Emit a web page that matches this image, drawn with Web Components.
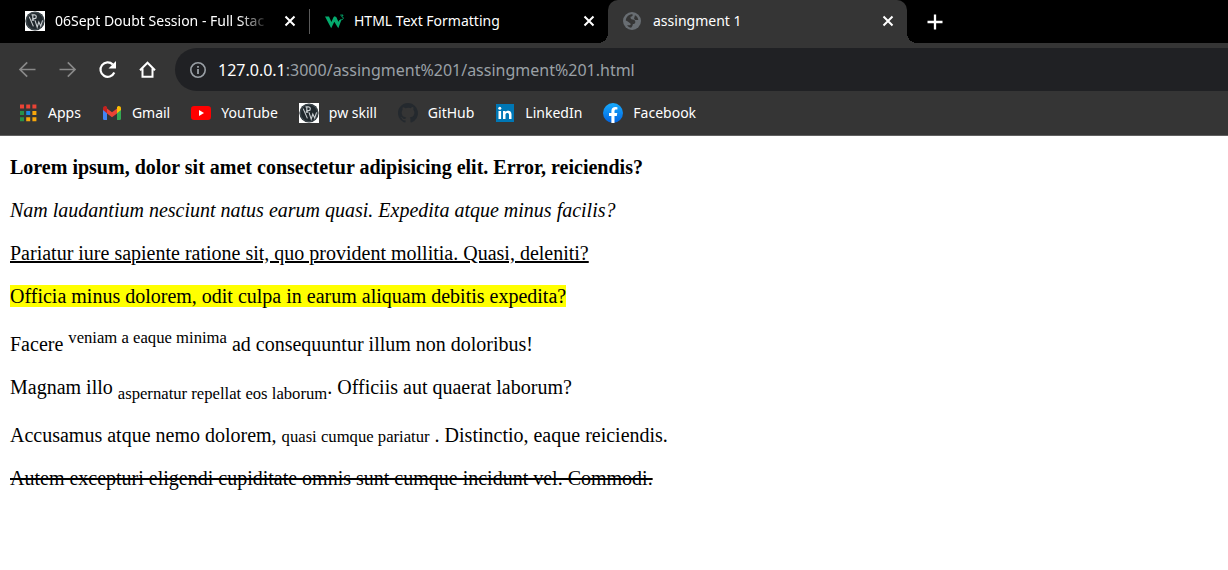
<!DOCTYPE html>
<html lang="en">
<head>
<meta charset="utf-8">
<title>assingment 1</title>
<style>
body { margin: 0; background: #fff; font-family: "Noto Sans", "Open Sans", sans-serif; }
</style>
</head>
<body>
<browser-window></browser-window>
<script>
const icons = {
  pw: '<rect width="20" height="20" fill="#fff"/><circle cx="10" cy="10" r="9.6" fill="#20282d"/><circle cx="10" cy="10" r="8.6" fill="none" stroke="#59646a" stroke-width=".6"/><path d="M6.500 3.800h3c2.400 0 2.400 3.800 0 3.800H8M7.800 3.800v5.400M6.600 9.200h2.600" fill="none" stroke="#c9ced1" stroke-width="1.200"/><path d="M4.200 5.600l4.200 9.800M10 9.400l2.200 6.800 1.600-5.200 1.900 4 1.900-5.600" fill="none" stroke="#c9ced1" stroke-width="1.100"/>',
  w3: '<path d="M1 5.500h4l2.400 5.400L9.600 6l1.200-.8 1.600 1 2 4.500 1-1.600h2l-3.100 8.200-4-6.600-3.100 6.600z" fill="#04aa6d"/><path d="M16.300 4.100h2.800l-1.400 1.700c2.200 0 2 3-.2 2.900-.7 0-1.100-.3-1.400-.8" fill="none" stroke="#04aa6d" stroke-width="1"/>',
  globe: '<circle cx="9" cy="10" r="9" fill="#686d72"/><path d="M2.800 9.500C3 5.800 5.800 3.200 9.500 3.200c.6 1.500-.3 2.400-2 2.600-.1 1.600.5 2.500 2 2.700 1.900.2 2.800 1 2.800 2.500 0 1.400-.9 2-2.400 2.100-.3 1.600-.9 2.900-1.800 3.600-1.500-.3-3-1.100-4-2.500h2.700c1 0 1.200-1.300.3-1.900L4.800 10.600z" fill="#353535"/><path d="M12 4.300c1.700.8 3 2.500 3.300 4.700h-2c-1.300 0-2.200-.7-2.200-1.800z" fill="#353535"/>',
  close: '<path d="M5.500 5.500l9 9m0-9l-9 9" fill="none" stroke="#fff" stroke-width="2"/>',
  plus: '<path d="M10 2.500v15M2.500 10h15" fill="none" stroke="#fff" stroke-width="2.300"/>',
  back: '<path d="M18.500 9.500H3m7.200-7.200L3 9.500l7.200 7.200" fill="none" stroke="#898989" stroke-width="1.700"/>',
  forward: '<path d="M2.500 9.500H18m-7.200-7.200L18 9.500l-7.200 7.200" fill="none" stroke="#898989" stroke-width="1.700"/>',
  reload: '<path d="M17.300 12.500a7.200 7.200 0 1 1-1.500-8" fill="none" stroke="#fff" stroke-width="2.200"/><path d="M19 1v7.500h-7.500z" fill="#fff"/>',
  home: '<path d="M3 10.200L10.500 2.700l7.500 7.500M5.500 8.500v8.200h10V8.500" fill="none" stroke="#fff" stroke-width="2"/>',
  info: '<circle cx="10" cy="10" r="7.200" fill="none" stroke="#9aa0a6" stroke-width="1.600"/><path d="M10 9v5M10 6v1.800" stroke="#9aa0a6" stroke-width="1.800"/>',
  apps: '<g fill="#ea4335"><path d="M2 1.500h4v4H2zM8.200 1.500h4v4h-4zM14.400 1.500h4v4h-4z"/></g><path d="M2 8h4v4H2zM2 14.300h4v4H2z" fill="#27914a"/><path d="M8.200 8h4v4h-4z" fill="#1e88e5"/><path d="M14.400 8h4v4h-4zM8.200 14.300h4v4h-4zM14.400 14.300h4v4h-4z" fill="#f9a70b"/>',
  gmail: '<path d="M1 6h4v11H2.200Q1 17 1 15.800z" fill="#4285f4"/><path d="M15 6h4v9.800q0 1.200-1.200 1.200H15z" fill="#34a853"/><path d="M5 5.500l5 3.800 5-3.800v5L10 14.300l-5-3.800z" fill="#ea4335"/><path d="M1 7V5.400c0-2 2.200-2.900 3.400-2L5 4v6.200z" fill="#c5221f"/><path d="M19 7V5.400c0-2-2.200-2.900-3.400-2L15 4v6.200z" fill="#fbbc04"/>',
  youtube: '<rect y="3" width="20" height="14" rx="3.200" fill="#f00"/><path d="M8 7v6l5-3z" fill="#fff"/>',
  github: '<path transform="scale(1.25)" d="M8 0C3.580 0 0 3.580 0 8c0 3.540 2.290 6.530 5.470 7.590.4.07.55-.17.55-.38v-1.340c-2.230.48-2.700-1.070-2.700-1.070-.36-.93-.89-1.170-.89-1.170-.73-.5.05-.49.05-.49.81.06 1.230.83 1.230.83.72 1.230 1.880.87 2.340.67.07-.52.28-.88.51-1.080-1.780-.2-3.640-.89-3.640-3.950 0-.87.31-1.590.82-2.150-.08-.2-.36-1.020.08-2.120 0 0 .67-.21 2.200.82A7.700 7.700 0 0 1 8 3.870c.68 0 1.360.09 2 .26 1.530-1.040 2.200-.82 2.200-.82.44 1.100.16 1.920.08 2.120.51.56.82 1.270.82 2.150 0 3.070-1.870 3.750-3.650 3.950.29.25.54.73.54 1.480v2.200c0 .21.15.46.55.38A8 8 0 0 0 8 0z" fill="#24292e"/>',
  linkedin: '<rect x="1" y="1" width="18" height="18" fill="#0077b5"/><path d="M3.500 8h2.600v8H3.500zM8 8h2.500v1.100C12 7 16.500 7.200 16.500 11.300V16H14v-4.200c0-2.400-3.500-2.300-3.500 0V16H8z" fill="#fff"/><circle cx="4.800" cy="5.300" r="1.500" fill="#fff"/>',
  facebook: '<defs><linearGradient id="b" x2="0" y2="1"><stop stop-color="#18acfe"/><stop offset="1" stop-color="#0163e0"/></linearGradient></defs><circle cx="10" cy="10" r="10" fill="url(#b)"/><path d="M8.400 20v-7H6v-2.900h2.400V8c0-2.700 1.600-4 4-4l2 .2v2.400h-1.200c-1.200 0-1.700.7-1.700 1.600v1.900h2.800l-.5 2.900h-2.300v7z" fill="#fff"/>'
};

class UiIcon extends HTMLElement {
  constructor() {
    super();
    this.attachShadow({ mode: 'open' }).innerHTML = `
      <style>:host{display:block;flex:none;width:20px;height:20px}svg{display:block;overflow:visible}</style>
      <svg width="20" height="20" viewBox="0 0 20 20" aria-hidden="true">${icons[this.getAttribute('name')]}</svg>`;
  }
}

class BrowserTab extends HTMLElement {
  constructor() {
    super();
    this.attachShadow({ mode: 'open' }).innerHTML = `
      <style>
        :host{display:flex;align-items:center;flex:0 1 299px;min-width:0;box-sizing:border-box;height:43px;padding:0 9px 1px 15px;position:relative;color:#fff}
        :host([active]){background:#353535;border-radius:10px 10px 0 0}
        :host([active])::before,:host([active])::after{content:"";position:absolute;bottom:0;width:10px;height:10px}
        :host([active])::before{right:100%;background:radial-gradient(circle at 0 0,transparent 10px,#353535 10px)}
        :host([active])::after{left:100%;background:radial-gradient(circle at 100% 0,transparent 10px,#353535 10px)}
        :host([divided]){background:linear-gradient(#5a5a5a,#5a5a5a) 0 9px/1px 25px no-repeat}
        button{font:inherit;color:inherit;background:none;border:0;padding:0}
        .title{display:flex;align-items:center;gap:10px;flex:1;min-width:0;text-align:left}
        .text{flex:1;min-width:0;overflow:hidden;white-space:nowrap;font-size:14px;line-height:24px}
        :host([fade]) .text{-webkit-mask:linear-gradient(to left,transparent,#000 30px);mask:linear-gradient(to left,transparent,#000 30px)}
        .close{margin-left:11px}
      </style>
      <button class="title" role="tab"><ui-icon name="${this.getAttribute('icon')}"></ui-icon><span class="text"><slot></slot></span></button>
      <button class="close" aria-label="Close tab"><ui-icon name="close"></ui-icon></button>`;
  }
}

class TabStrip extends HTMLElement {
  constructor() {
    super();
    this.attachShadow({ mode: 'open' }).innerHTML = `
      <style>
        :host{display:flex;align-items:center;background:#000;padding-left:10px;height:43px}
        .new{background:none;border:0;padding:0;margin-left:18px}
      </style>
      <browser-tab icon="pw" fade>06Sept Doubt Session - Full Stac</browser-tab>
      <browser-tab icon="w3" divided>HTML Text Formatting</browser-tab>
      <browser-tab icon="globe" active>assingment 1</browser-tab>
      <button class="new" aria-label="New tab"><ui-icon name="plus"></ui-icon></button>`;
  }
}

class NavBar extends HTMLElement {
  constructor() {
    super();
    this.attachShadow({ mode: 'open' }).innerHTML = `
      <style>
        :host{display:flex;align-items:center;gap:20px;padding:5px 0 5px 17px;background:#353535}
        button{background:none;border:0;padding:0}
        .address{flex:1;min-width:0;display:flex;align-items:center;gap:10px;height:43px;box-sizing:border-box;padding-left:13px;margin-left:-2px;background:#202124;border-radius:22px 0 0 22px;font-size:16px;line-height:24px;color:#9aa0a6}
        b{font-weight:400;color:#fff}
      </style>
      <button aria-label="Back"><ui-icon name="back"></ui-icon></button>
      <button aria-label="Forward"><ui-icon name="forward"></ui-icon></button>
      <button aria-label="Reload"><ui-icon name="reload"></ui-icon></button>
      <button aria-label="Home"><ui-icon name="home"></ui-icon></button>
      <div class="address"><ui-icon name="info"></ui-icon><span><b>127.0.0.1</b>:3000/assingment%201/assingment%201.html</span></div>`;
  }
}

class BookmarkLink extends HTMLElement {
  constructor() {
    super();
    this.attachShadow({ mode: 'open' }).innerHTML = `
      <style>
        :host{display:block}
        a{display:flex;align-items:center;gap:10px;color:#fff;text-decoration:none;font-size:14px;line-height:24px;white-space:nowrap}
      </style>
      <a href="#"><ui-icon name="${this.getAttribute('icon')}"></ui-icon><span><slot></slot></span></a>`;
  }
}

class BookmarkBar extends HTMLElement {
  constructor() {
    super();
    this.attachShadow({ mode: 'open' }).innerHTML = `
      <style>:host{display:flex;align-items:center;gap:21px;padding:5px 18px 10px;background:#353535;border-bottom:1px solid #606060}</style>
      <bookmark-link icon="apps">Apps</bookmark-link>
      <bookmark-link icon="gmail">Gmail</bookmark-link>
      <bookmark-link icon="youtube">YouTube</bookmark-link>
      <bookmark-link icon="pw">pw skill</bookmark-link>
      <bookmark-link icon="github">GitHub</bookmark-link>
      <bookmark-link icon="linkedin">LinkedIn</bookmark-link>
      <bookmark-link icon="facebook">Facebook</bookmark-link>`;
  }
}

class PageContent extends HTMLElement {
  constructor() {
    super();
    this.attachShadow({ mode: 'open' }).innerHTML = `
      <style>
        :host{display:block;padding:0 10px;font-family:"Liberation Serif","Times New Roman",serif;font-size:20px;color:#000}
        p{margin:20px 0}
        u,del{text-decoration-thickness:2px}
        mark{background:#ff0;color:#000}
      </style>
      <p><b>Lorem ipsum, dolor sit amet consectetur adipisicing elit. Error, reiciendis?</b></p>
      <p><i>Nam laudantium nesciunt natus earum quasi. Expedita atque minus facilis?</i></p>
      <p><u>Pariatur iure sapiente ratione sit, quo provident mollitia. Quasi, deleniti?</u></p>
      <p><mark>Officia minus dolorem, odit culpa in earum aliquam debitis expedita?</mark></p>
      <p>Facere <sup>veniam a eaque minima</sup> ad consequuntur illum non doloribus!</p>
      <p>Magnam illo <sub>aspernatur repellat eos laborum</sub>. Officiis aut quaerat laborum?</p>
      <p>Accusamus atque nemo dolorem, <small>quasi cumque pariatur</small> . Distinctio, eaque reiciendis.</p>
      <p><del>Autem excepturi eligendi cupiditate omnis sunt cumque incidunt vel. Commodi.</del></p>`;
  }
}

class BrowserWindow extends HTMLElement {
  constructor() {
    super();
    this.attachShadow({ mode: 'open' }).innerHTML = `
      <style>:host{display:block}</style>
      <tab-strip></tab-strip><nav-bar></nav-bar><bookmark-bar></bookmark-bar><page-content></page-content>`;
  }
}

customElements.define('ui-icon', UiIcon);
customElements.define('browser-tab', BrowserTab);
customElements.define('tab-strip', TabStrip);
customElements.define('nav-bar', NavBar);
customElements.define('bookmark-link', BookmarkLink);
customElements.define('bookmark-bar', BookmarkBar);
customElements.define('page-content', PageContent);
customElements.define('browser-window', BrowserWindow);
</script>
</body>
</html>
